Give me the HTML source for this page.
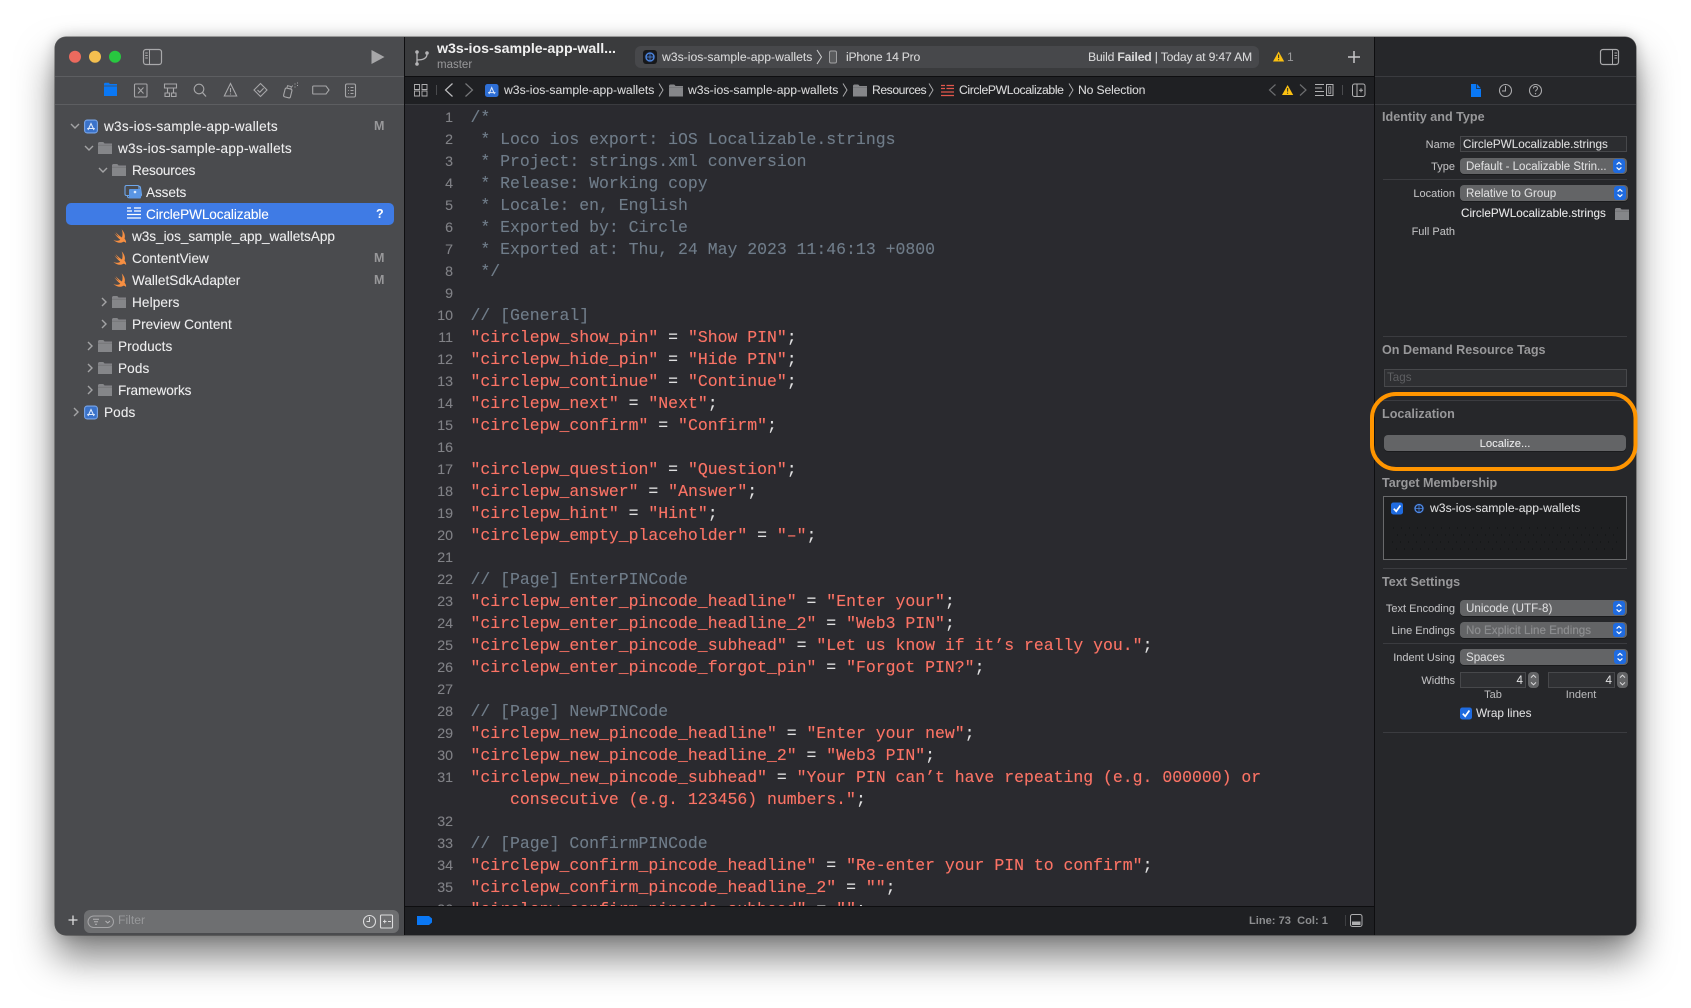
<!DOCTYPE html>
<html>
<head>
<meta charset="utf-8">
<title>Xcode</title>
<style>
html,body{margin:0;padding:0;background:#fff;width:1691px;height:1008px;overflow:hidden}
body{position:relative;font-family:"Liberation Sans",sans-serif;-webkit-font-smoothing:antialiased}
#win{position:absolute;left:55px;top:37px;width:1581px;height:898px;border-radius:11px;overflow:hidden;background:#26272a}
#shadow{position:absolute;left:55px;top:37px;width:1581px;height:898px;border-radius:11px;box-shadow:0 22px 38px rgba(0,0,0,.5),0 0 14px rgba(0,0,0,.22),0 0 0 .5px rgba(0,0,0,.6)}
#in{position:absolute;left:-55px;top:-37px;width:1691px;height:1008px}
.b{position:absolute;display:block}
.t{position:absolute;display:block;white-space:pre;line-height:20px;height:20px}
.s{font-size:13.6px;color:#ececed;text-shadow:0 0 .5px rgba(236,236,237,.6);margin-top:1px}
.j{font-size:12.2px;color:#d6d6d7;text-shadow:0 0 .4px rgba(214,214,215,.5)}
.l{font-size:11px;color:#bcbcbe;text-align:right;width:90px;left:1365px;text-shadow:0 0 .4px rgba(188,188,190,.5);margin-top:1px}
.h{font-size:12.6px;font-weight:bold;color:#98989a;left:1382px}
.v{font-size:11.6px;color:#dcdcdd;text-shadow:0 0 .4px rgba(220,220,221,.5);margin-top:1px}
.p{position:absolute;left:1460px;width:168px;height:16px;border-radius:4px;background:#636466;box-shadow:0 1px 0 rgba(0,0,0,.3)}
.f{position:absolute;background:#2f3033;border:1px solid #47484b;box-sizing:border-box}
.sep{position:absolute;height:1px;background:#3b3c40}
pre{margin:0;position:absolute}
#code{left:470.5px;top:107px;font:16.48px/22px "Liberation Mono",monospace;color:#fb7365;text-shadow:0 0 .5px rgba(251,115,101,.6)}
#code i{font-style:normal;color:#6f7c89;text-shadow:0 0 .5px rgba(111,124,137,.6)}
#code b{font-weight:normal;color:#dfdfe0;text-shadow:0 0 .5px rgba(223,223,224,.6)}
#nums{left:410px;width:43px;top:107px;text-align:right;font:14.2px/22px "Liberation Sans",sans-serif;color:#808186;text-shadow:0 0 .4px rgba(128,129,134,.6)}
</style>
</head>
<body>
<div id="shadow"></div>
<div id="win"><div id="in">
  <!-- panels -->
  <div class="b" style="left:55px;top:37px;width:349px;height:898px;background:#4a4b4e"></div>
  <div class="b" style="left:55px;top:76px;width:349px;height:1px;background:#5d5e61"></div>
  <div class="b" style="left:55px;top:104px;width:349px;height:1px;background:#5d5e61"></div>
  <div class="b" style="left:404px;top:37px;width:1px;height:898px;background:#0e0e10"></div>
  <div class="b" style="left:405px;top:37px;width:969px;height:39px;background:#3a3b3d"></div>
  <div class="b" style="left:405px;top:76px;width:969px;height:1px;background:#0e0e10"></div>
  <div class="b" style="left:405px;top:77px;width:969px;height:27px;background:#1f2023"></div>
  <div class="b" style="left:405px;top:104px;width:969px;height:1px;background:#3a3b3f"></div>
  <div class="b" style="left:405px;top:105px;width:969px;height:801px;background:#2a2a2f;overflow:hidden"></div>
  <div class="b" style="left:1374px;top:37px;width:1px;height:898px;background:#0e0e10"></div>
  <div class="b" style="left:1375px;top:37px;width:261px;height:898px;background:#26272a"></div>
  <div class="b" style="left:1375px;top:76px;width:261px;height:1px;background:#3a3b3f"></div>
  <div class="b" style="left:1375px;top:104px;width:261px;height:1px;background:#3a3b3f"></div>

  <!-- code -->
  <div class="b" style="left:405px;top:105px;width:969px;height:801px;overflow:hidden">
    <div class="b" style="left:-405px;top:-105px;width:1691px;height:1008px">
<pre id="nums">1
2
3
4
5
6
7
8
9
10
11
12
13
14
15
16
17
18
19
20
21
22
23
24
25
26
27
28
29
30
31

32
33
34
35
36</pre>
<pre id="code"><i>/*
 * Loco ios export: iOS Localizable.strings
 * Project: strings.xml conversion
 * Release: Working copy
 * Locale: en, English
 * Exported by: Circle
 * Exported at: Thu, 24 May 2023 11:46:13 +0800
 */

// [General]</i>
"circlepw_show_pin" <b>=</b> "Show PIN"<b>;</b>
"circlepw_hide_pin" <b>=</b> "Hide PIN"<b>;</b>
"circlepw_continue" <b>=</b> "Continue"<b>;</b>
"circlepw_next" <b>=</b> "Next"<b>;</b>
"circlepw_confirm" <b>=</b> "Confirm"<b>;</b>

"circlepw_question" <b>=</b> "Question"<b>;</b>
"circlepw_answer" <b>=</b> "Answer"<b>;</b>
"circlepw_hint" <b>=</b> "Hint"<b>;</b>
"circlepw_empty_placeholder" <b>=</b> "–"<b>;</b>

<i>// [Page] EnterPINCode</i>
"circlepw_enter_pincode_headline" <b>=</b> "Enter your"<b>;</b>
"circlepw_enter_pincode_headline_2" <b>=</b> "Web3 PIN"<b>;</b>
"circlepw_enter_pincode_subhead" <b>=</b> "Let us know if it’s really you."<b>;</b>
"circlepw_enter_pincode_forgot_pin" <b>=</b> "Forgot PIN?"<b>;</b>

<i>// [Page] NewPINCode</i>
"circlepw_new_pincode_headline" <b>=</b> "Enter your new"<b>;</b>
"circlepw_new_pincode_headline_2" <b>=</b> "Web3 PIN"<b>;</b>
"circlepw_new_pincode_subhead" <b>=</b> "Your PIN can’t have repeating (e.g. 000000) or
    consecutive (e.g. 123456) numbers."<b>;</b>

<i>// [Page] ConfirmPINCode</i>
"circlepw_confirm_pincode_headline" <b>=</b> "Re-enter your PIN to confirm"<b>;</b>
"circlepw_confirm_pincode_headline_2" <b>=</b> ""<b>;</b>
"circlepw_confirm_pincode_subhead" <b>=</b> ""<b>;</b></pre>
    </div>
  </div>

  <!-- status bar -->
  <div class="b" style="left:405px;top:906px;width:969px;height:29px;background:#1f2023;border-top:1px solid #0e0e10;box-sizing:border-box"></div>
  <span class="t" style="left:1249px;top:911px;font-size:11.1px;font-weight:bold;color:#8d8e90">Line: 73  Col: 1</span>

  <!-- sidebar rows -->
  <div class="b" style="left:66px;top:203px;width:328px;height:22px;border-radius:5px;background:#3f7be5"></div>
  <span class="t s" style="left:104px;top:116px;letter-spacing:.24px">w3s-ios-sample-app-wallets</span>
  <span class="t s" style="left:118px;top:138px;letter-spacing:.24px">w3s-ios-sample-app-wallets</span>
  <span class="t s" style="left:132px;top:160px;letter-spacing:-.2px">Resources</span>
  <span class="t s" style="left:146px;top:182px;letter-spacing:-.1px">Assets</span>
  <span class="t s" style="left:146px;top:204px;color:#fff;letter-spacing:-.1px">CirclePWLocalizable</span>
  <span class="t s" style="left:132px;top:226px;letter-spacing:-.04px">w3s_ios_sample_app_walletsApp</span>
  <span class="t s" style="left:132px;top:248px">ContentView</span>
  <span class="t s" style="left:132px;top:270px">WalletSdkAdapter</span>
  <span class="t s" style="left:132px;top:292px;letter-spacing:.1px">Helpers</span>
  <span class="t s" style="left:132px;top:314px">Preview Content</span>
  <span class="t s" style="left:118px;top:336px;letter-spacing:.1px">Products</span>
  <span class="t s" style="left:118px;top:358px;letter-spacing:.1px">Pods</span>
  <span class="t s" style="left:118px;top:380px;letter-spacing:-.15px">Frameworks</span>
  <span class="t s" style="left:104px;top:402px;letter-spacing:.1px">Pods</span>
  <span class="t" style="left:374px;top:116px;font-size:12.5px;font-weight:bold;color:#98989a">M</span>
  <span class="t" style="left:374px;top:248px;font-size:12.5px;font-weight:bold;color:#98989a">M</span>
  <span class="t" style="left:374px;top:270px;font-size:12.5px;font-weight:bold;color:#98989a">M</span>
  <span class="t" style="left:376px;top:204px;font-size:12.5px;font-weight:bold;color:#fff">?</span>

  <!-- filter -->
  <div class="b" style="left:84px;top:910px;width:315px;height:23px;border-radius:6px;background:#6e6f71"></div>
  <span class="t" style="left:118px;top:910px;font-size:12.2px;color:#97989a">Filter</span>

  <!-- toolbar -->
  <span class="t" style="left:437px;top:39px;font-size:14.2px;font-weight:bold;color:#f0f0f0;width:182px">w3s-ios-sample-app-wall...</span>
  <span class="t" style="left:437px;top:55px;font-size:11.5px;color:#98989a">master</span>
  <div class="b" style="left:635px;top:46px;width:624px;height:22px;border-radius:6px;background:#47484b"></div>
  <span class="t j" style="left:662px;top:47px">w3s-ios-sample-app-wallets</span>
  <span class="t j" style="left:846px;top:47px;letter-spacing:-.25px">iPhone 14 Pro</span>
  <span class="t j" style="left:1088px;top:47px;letter-spacing:-.18px">Build <b>Failed</b> | Today at 9:47 AM</span>
  <span class="t" style="left:1287px;top:47px;font-size:12px;color:#9a9a9c">1</span>

  <!-- jump bar -->
  <span class="t j" style="left:504px;top:80px">w3s-ios-sample-app-wallets</span>
  <span class="t j" style="left:688px;top:80px">w3s-ios-sample-app-wallets</span>
  <span class="t j" style="left:872px;top:80px;letter-spacing:-.45px">Resources</span>
  <span class="t j" style="left:959px;top:80px;letter-spacing:-.38px">CirclePWLocalizable</span>
  <span class="t j" style="left:1078px;top:80px;letter-spacing:-.15px">No Selection</span>

  <!-- inspector -->
  <span class="t h" style="top:107px">Identity and Type</span>
  <span class="t l" style="top:134px">Name</span>
  <div class="f" style="left:1460px;top:136px;width:167px;height:16px;background:#2c2d30"></div>
  <span class="t v" style="left:1463px;top:134px;font-size:11.7px">CirclePWLocalizable.strings</span>
  <span class="t l" style="top:156px">Type</span>
  <div class="p" style="top:158px;width:167px"></div>
  <span class="t v" style="left:1466px;top:156px;font-size:11.5px">Default - Localizable Strin...</span>
  <div class="sep" style="left:1383px;top:179px;width:244px"></div>
  <span class="t l" style="top:183px">Location</span>
  <div class="p" style="top:185px"></div>
  <span class="t v" style="left:1466px;top:183px">Relative to Group</span>
  <span class="t v" style="left:1461px;top:203px;color:#e8e8e9;font-size:11.7px">CirclePWLocalizable.strings</span>
  <span class="t l" style="top:221px">Full Path</span>

  <div class="sep" style="left:1383px;top:336px;width:244px"></div>
  <span class="t h" style="top:340px">On Demand Resource Tags</span>
  <div class="f" style="left:1384px;top:369px;width:243px;height:18px;background:#2f3033"></div>
  <span class="t" style="left:1387px;top:368px;font-size:11.6px;color:#5e5f62">Tags</span>
  <div class="sep" style="left:1383px;top:400px;width:244px"></div>
  <span class="t h" style="top:404px">Localization</span>
  <div class="b" style="left:1384px;top:435px;width:242px;height:16px;border-radius:4px;background:#636466;box-shadow:0 1px 0 rgba(0,0,0,.3)"></div>
  <span class="t v" style="left:1384px;top:433px;width:242px;text-align:center;color:#ececed;font-size:11.3px">Localize...</span>
  <span class="t h" style="top:473px">Target Membership</span>
  <div class="b" style="left:1383px;top:496px;width:244px;height:64px;background:#1e1f21;border:1px solid #68696b;box-sizing:border-box"></div>
  <span class="t v" style="left:1430px;top:498px;font-size:12.2px;margin-top:0">w3s-ios-sample-app-wallets</span>
  <div class="sep" style="left:1383px;top:568px;width:244px"></div>
  <span class="t h" style="top:572px">Text Settings</span>
  <span class="t l" style="top:598px">Text Encoding</span>
  <div class="p" style="top:600px;width:167px"></div>
  <span class="t v" style="left:1466px;top:598px">Unicode (UTF-8)</span>
  <span class="t l" style="top:620px">Line Endings</span>
  <div class="p" style="top:622px;width:167px"></div>
  <span class="t v" style="left:1466px;top:620px;color:#8a8b8d">No Explicit Line Endings</span>
  <div class="sep" style="left:1383px;top:643px;width:244px"></div>
  <span class="t l" style="top:647px">Indent Using</span>
  <div class="p" style="top:649px"></div>
  <span class="t v" style="left:1466px;top:647px">Spaces</span>
  <span class="t l" style="top:670px">Widths</span>
  <div class="f" style="left:1460px;top:672px;width:66px;height:16px"></div>
  <div class="f" style="left:1548px;top:672px;width:67px;height:16px"></div>
  <span class="t v" style="left:1460px;top:670px;width:63px;text-align:right">4</span>
  <span class="t v" style="left:1548px;top:670px;width:64px;text-align:right">4</span>
  <div class="b" style="left:1528px;top:672px;width:11px;height:16px;border-radius:4px;background:#636466"></div>
  <div class="b" style="left:1617px;top:672px;width:11px;height:16px;border-radius:4px;background:#636466"></div>
  <span class="t" style="left:1460px;top:685px;width:66px;text-align:center;font-size:11px;color:#bcbcbe">Tab</span>
  <span class="t" style="left:1548px;top:685px;width:66px;text-align:center;font-size:11px;color:#bcbcbe">Indent</span>
  <span class="t v" style="left:1476px;top:703px;font-size:11.8px;margin-top:0">Wrap lines</span>
  <div class="sep" style="left:1383px;top:732px;width:244px"></div>

  <!-- icons -->
  <svg class="b" style="left:0;top:0" width="1691" height="1008" viewBox="0 0 1691 1008" fill="none">
    <defs>
      <g id="fold"><path d="M0 2.5C0 1.7.7 1 1.5 1h3.2c.5 0 .9.2 1.2.6l.6.9H14v10.5H0z" fill="#858689"/><path d="M0 4.2h14" stroke="#6f7073" stroke-width=".7"/></g>
      <g id="swift"><path d="M9.5 0.8C12 3.4 13 6.4 12.1 9c1.3 1.6 1.6 3 1.3 4-.7-1.1-1.8-1.4-2.8-1-2.1 1.2-5.6 1-8.6-2 2.3 1.3 4.8 1.2 6.3 0C6.2 8.4 4.2 6 3 4.3c1.5 1.4 3.3 2.7 4.5 3.500C6 6.300 4.700 4.500 4 3.200c2 2 4 3.800 5.800 4.800.7-2.200.8-4.500-.3-7.200z" fill="#f78f42"/></g>
      <g id="app"><rect x=".6" y=".6" width="12.8" height="12.8" rx="2.5" fill="#3a72c9" stroke="#7aa7ea" stroke-width="1.1"/><path d="M4 10.5 7 4l3 6.5M3.2 9h7.6" stroke="#dbe8fb" stroke-width="1.1"/></g>
      <g id="pop"><rect width="12" height="14" rx="3" fill="#1f6be0"/><path d="M3.6 5.6 6 3.4l2.4 2.2M3.6 8.4 6 10.6l2.4-2.2" stroke="#fff" stroke-width="1.2"/></g>
      <g id="tgt"><circle cx="6" cy="6" r="5.5" fill="#1b2233"/><circle cx="6" cy="6" r="4" stroke="#4e8ae6" stroke-width="1.3"/><path d="M2 6h8M6 2v8" stroke="#4e8ae6" stroke-width=".7"/></g>
      <g id="chk"><rect width="12" height="12" rx="2.4" fill="#1f6be0"/><path d="M2.8 6.2 5.2 8.8 9.4 3" stroke="#fff" stroke-width="1.7"/></g>
      <g id="tri"><path d="M5.6 0 11.2 10H0z" fill="#fbc011"/><path d="M5.6 3v3.6" stroke="#3a3a2a" stroke-width="1.1"/><circle cx="5.6" cy="8.2" r=".6" fill="#3a3a2a"/></g>
      <g id="step"><path d="M3 5.6 5.500 3.200 8 5.600M3 10.400l2.500 2.400L8 10.400" stroke="#d8d8d9" stroke-width="1"/></g>
    </defs>

    <!-- traffic lights -->
    <circle cx="75" cy="56.7" r="6" fill="#ec6a5e"/><circle cx="95" cy="56.7" r="6" fill="#f4bf4f"/><circle cx="115" cy="56.7" r="6" fill="#28c840"/>
    <!-- sidebar toggle -->
    <rect x="143.5" y="49.5" width="18" height="15" rx="2.5" stroke="#a9a9ab" stroke-width="1.2"/><path d="M149.5 49.5v15M145.2 53h2.6M145.2 55.5h2.6M145.2 58h2.6" stroke="#a9a9ab" stroke-width="1"/>
    <!-- play -->
    <path d="M371.5 50v14l13-7z" fill="#a7a7a9"/>

    <!-- navigator tabs -->
    <path d="M104 84c0-.8.6-1.3 1.3-1.3h3.500l1 1.300H117V96H104z" fill="#0a78f5"/><path d="M104 86h13" stroke="#4a4b4e" stroke-width=".8"/>
    <g stroke="#a6a6a8" stroke-width="1.1">
      <rect x="134.5" y="84" width="12.5" height="13" rx="1"/><path d="M138 87.5l5.500 6M143.500 87.500l-5.500 6" stroke-width="1"/>
      <path d="M164.5 84h12v4h-12zM167.5 88v5M173.500 88v5M165 93h4.500v3.500H165zM171.500 93h4.500v3.500h-4.500z"/>
      <circle cx="199" cy="89" r="4.8"/><path d="M202.5 92.5 206 96.5" stroke-width="1.3"/>
      <path d="M230.5 83.5 224.3 96h12.4zM230.5 88v4.3M230.500 93.500v1"/>
      <path d="M260.5 83.5 267 90l-6.500 6.500L254 90z"/><path d="M257.500 90l2.300 2.300 3.800-4"/>
      <g transform="rotate(14 288 92)"><rect x="284.5" y="88.5" width="7" height="9" rx="1.5"/><path d="M286 88.500v-2.500h4v2.500" stroke-width="1"/></g><path d="M292 86h1M294.500 84h1M294.500 87h1M297 85.500h1M297 83h1" stroke-width="1"/>
      <path d="M313.500 86H326l3 4-3 4h-12.500a.8.800 0 0 1-.8-.8v-6.400a.8.800 0 0 1 .8-.8z"/>
      <rect x="345.5" y="84" width="10" height="13" rx="1.5"/><path d="M348 87.500h.8M350.500 87.500h3M348 90.500h.8M350.500 90.500h3M348 93.500h.8M350.500 93.500h3"/>
    </g>

    <!-- sidebar disclosure -->
    <g stroke="#a3a3a5" stroke-width="1.4">
      <path d="M71 124l4 4 4-4"/><path d="M85 146l4 4 4-4"/><path d="M99 168l4 4 4-4"/>
      <path d="M102 298l4 4-4 4"/><path d="M102 320l4 4-4 4"/>
      <path d="M88 342l4 4-4 4"/><path d="M88 364l4 4-4 4"/><path d="M88 386l4 4-4 4"/><path d="M74 408l4 4-4 4"/>
    </g>
    <!-- sidebar icons -->
    <use href="#app" x="84" y="119.5"/>
    <use href="#fold" x="98" y="141"/>
    <use href="#fold" x="112" y="163"/>
    <g stroke="#6ea6ea" stroke-width="1.1"><rect x="127" y="187" width="14" height="10" rx="1.5" fill="#4a4b4e" transform="rotate(-8 134 192)"/><rect x="125" y="185.5" width="14" height="10" rx="1.5" fill="#4a4b4e"/></g><rect x="129" y="189" width="12" height="9.5" rx="1" fill="#5a96e4"/><circle cx="135" cy="192" r="1.3" fill="#e0ecfb"/>
    <path d="M127 208h4M134 208h7M127 211h5M134 211h7M127 214.5h14M127 218h14" stroke="#fff" stroke-width="1.2"/>
    <use href="#swift" transform="translate(111 228.5) scale(1.12)"/><use href="#swift" transform="translate(111 250.5) scale(1.12)"/><use href="#swift" transform="translate(111 272.5) scale(1.12)"/>
    <use href="#fold" x="112" y="295"/><use href="#fold" x="112" y="317"/>
    <use href="#fold" x="98" y="339"/><use href="#fold" x="98" y="361"/><use href="#fold" x="98" y="383"/>
    <use href="#app" x="84" y="405.5"/>

    <!-- filter bar -->
    <path d="M68.5 920h9M73 915.5v9.5" stroke="#dcdcdd" stroke-width="1.3"/>
    <rect x="88" y="916" width="25.5" height="11.5" rx="5.7" stroke="#a6a6a8" stroke-width="1"/>
    <path d="M93 919.3h6M94 921.8h4M95 924.3h2M105.5 921l2.2 2 2.2-2" stroke="#b4b4b6" stroke-width="1"/>
    <circle cx="369.5" cy="921.5" r="6" stroke="#dcdcdd" stroke-width="1.1"/><path d="M369.5 917v4.5h-3" stroke="#dcdcdd" stroke-width="1"/>
    <rect x="380.5" y="915" width="12" height="13" rx="1" stroke="#dcdcdd" stroke-width="1.1"/><path d="M383 921.5h3.500M384.700 919.700v3.600M388 921.500h3" stroke="#dcdcdd" stroke-width="1"/>

    <!-- branch icon -->
    <path d="M417 53v11M417 60c5 0 10-1 10-6" stroke="#b5b5b7" stroke-width="1.3"/><circle cx="417" cy="52" r="1.8" fill="#b5b5b7"/><circle cx="417" cy="64" r="1.8" fill="#b5b5b7"/><circle cx="427" cy="53" r="1.8" fill="#b5b5b7"/>
    <!-- scheme -->
    <rect x="643" y="50" width="14" height="14" rx="3" fill="#17181a"/><use href="#tgt" x="644" y="51"/>
    <path d="M817 50l4.500 7-4.500 7" stroke="#cfcfd0" stroke-width="1"/>
    <rect x="829.5" y="51" width="7" height="12" rx="1.5" stroke="#a0a0a2" fill="#5a5b5d" stroke-width="1"/>
    <use href="#tri" x="1273" y="51.5"/>
    <path d="M1348 57h12M1354 51v12" stroke="#c8c8ca" stroke-width="1.5"/>
    <!-- inspector toggle -->
    <rect x="1600.5" y="49.5" width="18" height="15" rx="2.5" stroke="#a9a9ab" stroke-width="1.2"/><path d="M1612.5 49.5v15M1614.5 53h2.6M1614.5 55.5h2.6M1614.5 58h2.6" stroke="#a9a9ab" stroke-width="1"/>

    <!-- jump bar -->
    <path d="M414.5 84.5h5v5h-5zM422 84.5h5v5h-5zM414.5 91h5v5h-5zM422 91h5v5h-5z" stroke="#b0b0b2" stroke-width=".9"/>
    <path d="M436.5 85v10" stroke="#4a4b4e"/>
    <path d="M452.5 83.5 445.5 90l7 6.5" stroke="#bdbdbf" stroke-width="1.2"/>
    <path d="M465.5 83.5 472.5 90l-7 6.5" stroke="#77787a" stroke-width="1.2"/>
    <rect x="485" y="84" width="13.5" height="13" rx="2.5" fill="#2e6fd6"/><path d="M489 94l2.700-6.500L494.500 94M488 92.600h7.500" stroke="#dbe8fb" stroke-width="1"/>
    <g stroke="#a9a9ab" stroke-width="1"><path d="M659 83.500l4 6.500-4 6.500M843 83.500l4 6.500-4 6.500M929 83.500l4 6.500-4 6.500M1069 83.500l4 6.500-4 6.500"/></g>
    <use href="#fold" x="669" y="83.5"/><use href="#fold" x="853" y="83.5"/>
    <path d="M941 85.5h4M946.5 85.5h7.5M941 88.5h4M946.5 88.5h7.5M941 92h13M941 95.5h13" stroke="#e2574c" stroke-width="1.3"/>
    <path d="M1275.5 84.5 1269.5 90l6 5.5" stroke="#6c6d6f" stroke-width="1.2"/>
    <use href="#tri" x="1282" y="85"/>
    <path d="M1300 84.5l6 5.500-6 5.500" stroke="#6c6d6f" stroke-width="1.2"/>
    <path d="M1315 84.5h9M1315 88h7M1315 91.5h9M1315 95.5h9" stroke="#b0b0b2" stroke-width="1"/><rect x="1326.5" y="84.5" width="6.5" height="11" stroke="#b0b0b2"/><rect x="1328.8" y="86.8" width="2" height="6.5" stroke="#b0b0b2" stroke-width=".8"/>
    <path d="M1342.5 85v10" stroke="#4a4b4e"/>
    <rect x="1352.5" y="84" width="12.5" height="12.5" rx="2" stroke="#b0b0b2"/><path d="M1357 84v12.500M1359 90.200h4M1361 88.200v4" stroke="#b0b0b2"/>

    <!-- status icons -->
    <path d="M417 916h12l3 2.500v4l-3 2.500h-12z" fill="#0a78f5"/>
    <path d="M1345.5 915v11" stroke="#3e3f42"/>
    <rect x="1350.5" y="914.5" width="11.5" height="12" rx="2" stroke="#aeaeb0"/><rect x="1352" y="921.5" width="8.5" height="3.5" fill="#aeaeb0"/>

    <!-- inspector tabs -->
    <path d="M1471 84h6l4 4.500V97h-10z" fill="#0a78f5"/><path d="M1476.5 84v4.500h4.500" stroke="#26272a" stroke-width=".7"/>
    <circle cx="1505.5" cy="90.5" r="6" stroke="#aaaaac" stroke-width="1.1"/><path d="M1505.5 86v5h-3.500" stroke="#aaaaac" stroke-width="1"/>
    <circle cx="1535.5" cy="90.5" r="6" stroke="#aaaaac" stroke-width="1.1"/><path d="M1533.5 88.5c0-2.600 4-2.600 4 0 0 1.400-2 1.500-2 3" stroke="#aaaaac" stroke-width="1"/><circle cx="1535.5" cy="93.7" r=".7" fill="#aaaaac"/>

    <!-- inspector controls -->
    <use href="#pop" x="1613" y="159"/><use href="#pop" x="1614" y="186"/><use href="#pop" x="1613" y="601"/><use href="#pop" x="1613" y="623"/><use href="#pop" x="1614" y="650"/>
    <use href="#fold" x="1615" y="207"/>
    <use href="#step" x="1528" y="672"/><use href="#step" x="1617" y="672"/>
    <use href="#chk" x="1391" y="502.5"/><use href="#tgt" x="1413" y="502.5"/><use href="#chk" x="1460" y="707.5"/>
    <path d="M1393 528h225M1397 535h222M1392 542h226M1396 549h220" stroke="#0f1011" stroke-width="1" stroke-dasharray="1 7"/>
  </svg>
</div></div>

<!-- highlight ring -->
<svg style="position:absolute;left:0;top:0" width="1691" height="1008" viewBox="0 0 1691 1008" fill="none">
  <rect x="1372" y="394" width="263.5" height="75" rx="24" stroke="#ff9500" stroke-width="4"/>
</svg>
</body>
</html>
